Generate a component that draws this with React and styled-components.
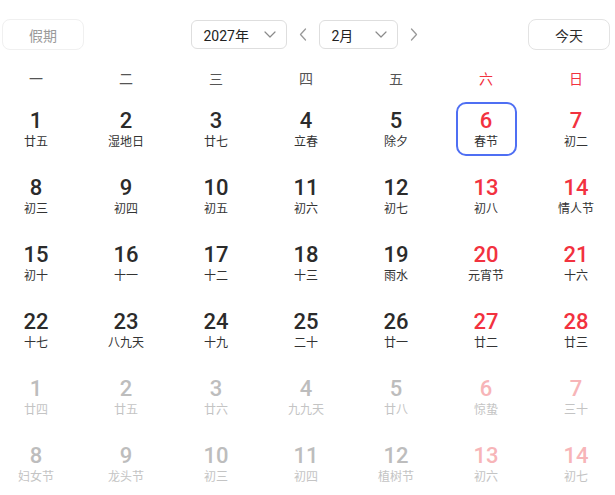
import React, { useState } from "react";
import styled, { createGlobalStyle, css } from "styled-components";

const GlobalStyle = createGlobalStyle`
  html, body {
    margin: 0;
    padding: 0;
    background: #ffffff;
  }
  body {
    font-family: Roboto, "Noto Sans CJK SC", "Noto Sans", sans-serif;
    color: #2b2b2b;
  }
`;

const RED = "#f2323f";

const Page = styled.div`
  width: 615px;
  height: 495px;
  overflow: hidden;
`;

const Header = styled.div`
  display: flex;
  justify-content: space-between;
  align-items: center;
  padding: 19px 5px 0 2px;
`;

const PillButton = styled.button`
  width: 82px;
  height: 31px;
  border: 1px solid #e6e6e6;
  border-radius: 8px;
  background: #fff;
  font-family: "Noto Sans CJK SC", sans-serif;
  font-size: 14px;
  color: ${(p) => (p.$muted ? "#9a9a9a" : "#2b2b2b")};
  border-color: ${(p) => (p.$muted ? "#f0f0f0" : "#e3e3e3")};
  cursor: pointer;
  padding: 0;
`;

const Controls = styled.div`
  display: flex;
  align-items: center;
  gap: 8px;
`;

const Select = styled.div`
  display: flex;
  align-items: center;
  justify-content: space-between;
  box-sizing: border-box;
  width: ${(p) => p.$width}px;
  height: 29px;
  padding: 0 10px 0 12px;
  border: 1px solid #dedede;
  border-radius: 6px;
  font-family: Roboto, "Noto Sans CJK SC", sans-serif;
  font-size: 14px;
  color: #222;
`;

const NavArrow = styled.button`
  width: 16px;
  height: 24px;
  display: flex;
  align-items: center;
  justify-content: center;
  border: none;
  background: none;
  padding: 0;
  cursor: pointer;
`;

const Weekdays = styled.div`
  display: grid;
  grid-template-columns: repeat(7, 72px);
  column-gap: 18px;
  margin-top: 18px;
  height: 20px;
`;

const Weekday = styled.div`
  text-align: center;
  line-height: 20px;
  font-family: "Noto Sans CJK SC", sans-serif;
  font-size: 14px;
  color: ${(p) => (p.$weekend ? RED : "#555")};
`;

const Grid = styled.div`
  display: grid;
  grid-template-columns: repeat(7, 72px);
  grid-auto-rows: 54px;
  column-gap: 18px;
  row-gap: 13px;
  margin-top: 14px;
`;

const Cell = styled.div`
  justify-self: center;
  width: 61px;
  box-sizing: border-box;
  display: flex;
  flex-direction: column;
  align-items: center;
  justify-content: center;
  border: 2px solid transparent;
  border-radius: 10px;
  ${(p) =>
    p.$selected &&
    css`
      border-color: #4f6ff3;
    `}
`;

const DayNum = styled.div`
  font-family: Roboto, sans-serif;
  font-size: 22px;
  font-weight: 500;
  line-height: 24px;
  color: ${(p) =>
    p.$faded ? (p.$weekend ? "#f7b5b8" : "#bdbdbd") : p.$weekend ? RED : "#2b2b2b"};
`;

const Lunar = styled.div`
  font-family: "Noto Sans CJK SC", sans-serif;
  font-size: 12px;
  line-height: 16px;
  color: ${(p) => (p.$faded ? "#c4c4c4" : "#333")};
`;

const Chevron = ({ dir }) => (
  <svg width="8" height="13" viewBox="0 0 8 13" fill="none">
    <path
      d={dir === "left" ? "M6.5 1 L1.5 6.5 L6.5 12" : "M1.5 1 L6.5 6.5 L1.5 12"}
      stroke="#9a9a9a"
      strokeWidth="1.3"
      strokeLinecap="round"
      strokeLinejoin="round"
    />
  </svg>
);

const Caret = () => (
  <svg width="12" height="7" viewBox="0 0 12 7" fill="none">
    <path d="M1 1 L6 6 L11 1" stroke="#8a8a8a" strokeWidth="1.2" strokeLinecap="round" strokeLinejoin="round" />
  </svg>
);

const WEEKDAYS = ["一", "二", "三", "四", "五", "六", "日"];

const FEB = [
  "廿五", "湿地日", "廿七", "立春", "除夕", "春节", "初二",
  "初三", "初四", "初五", "初六", "初七", "初八", "情人节",
  "初十", "十一", "十二", "十三", "雨水", "元宵节", "十六",
  "十七", "八九天", "十九", "二十", "廿一", "廿二", "廿三",
];

const MAR = [
  "廿四", "廿五", "廿六", "九九天", "廿八", "惊蛰", "三十",
  "妇女节", "龙头节", "初三", "初四", "植树节", "初六", "初七",
];

const days = [
  ...FEB.map((lunar, i) => ({ day: i + 1, lunar, faded: false })),
  ...MAR.map((lunar, i) => ({ day: i + 1, lunar, faded: true })),
];

export default function App() {
  const [selected, setSelected] = useState(5);

  return (
    <>
      <GlobalStyle />
      <Page>
        <Header>
          <PillButton $muted>假期</PillButton>
          <Controls>
            <Select $width={96}>
              <span>2027年</span>
              <Caret />
            </Select>
            <NavArrow aria-label="上个月">
              <Chevron dir="left" />
            </NavArrow>
            <Select $width={79}>
              <span>2月</span>
              <Caret />
            </Select>
            <NavArrow aria-label="下个月">
              <Chevron dir="right" />
            </NavArrow>
          </Controls>
          <PillButton>今天</PillButton>
        </Header>

        <Weekdays>
          {WEEKDAYS.map((w, i) => (
            <Weekday key={w} $weekend={i >= 5}>
              {w}
            </Weekday>
          ))}
        </Weekdays>

        <Grid>
          {days.map((d, i) => {
            const weekend = i % 7 >= 5;
            return (
              <Cell key={i} $selected={i === selected} onClick={() => setSelected(i)}>
                <DayNum $weekend={weekend} $faded={d.faded}>
                  {d.day}
                </DayNum>
                <Lunar $faded={d.faded}>{d.lunar}</Lunar>
              </Cell>
            );
          })}
        </Grid>
      </Page>
    </>
  );
}
